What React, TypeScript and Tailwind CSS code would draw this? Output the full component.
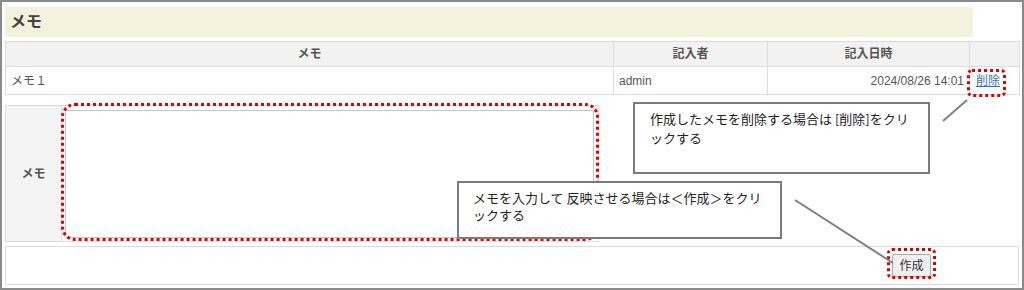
export default function App() {
  return (
    <div className="relative w-[1024px] h-[290px] border-2 border-[#8a8a8a] bg-white font-['Liberation_Sans','Noto_Sans_CJK_JP',sans-serif] text-[#555]">
      <div className="pl-[3px] pt-[5px]">
        <div className="w-[968px] h-[30px] bg-[#f4f2dc] px-[5px] text-[16px] font-bold leading-[30px] text-[#444]">
          メモ
        </div>

        <table className="mt-[4px] w-[1014px] table-fixed border-collapse text-[12px]">
          <colgroup>
            <col className="w-[608px]" />
            <col className="w-[154px]" />
            <col className="w-[202px]" />
            <col className="w-[50px]" />
          </colgroup>
          <thead>
            <tr className="h-[25px] bg-[#f2f2f2]">
              <th className="border border-[#dcdcdc] font-bold">メモ</th>
              <th className="border border-[#dcdcdc] font-bold">記入者</th>
              <th className="border border-[#dcdcdc] font-bold">記入日時</th>
              <th className="border border-[#dcdcdc]"></th>
            </tr>
          </thead>
          <tbody>
            <tr className="h-[28px]">
              <td className="border border-[#dcdcdc] px-[5px]">メモ１</td>
              <td className="border border-[#dcdcdc] px-[5px]">admin</td>
              <td className="border border-[#dcdcdc] pr-[5px] text-right">2024/08/26 14:01</td>
              <td className="border border-[#dcdcdc] pl-[6px]">
                <a href="#" className="text-[#2f74b8] underline">削除</a>
              </td>
            </tr>
          </tbody>
        </table>

        <div className="mt-[10px] flex w-[594px] h-[137px] border border-[#dcdcdc]">
          <div className="flex w-[56px] items-center justify-center border-r border-[#dcdcdc] bg-[#f4f4f4] text-[12px] font-bold">
            メモ
          </div>
          <div className="flex flex-1 pl-[3px] pt-[4px] pr-[4px] pb-[3px]">
            <textarea className="flex-1 resize-none rounded-[2px] border border-[#c6c6c6] bg-white" />
          </div>
        </div>

        <div className="mt-[4px] flex h-[39px] w-[1014px] items-center justify-end border border-[#dcdcdc] pr-[87px]">
          <button className="h-[23px] w-[39px] rounded-[2px] border border-[#a9a9a9] bg-[#efefef] text-[12px] text-[#333]">
            作成
          </button>
        </div>
      </div>

      {/* annotations */}
      <div className="absolute left-[965px] top-[67px] h-[28px] w-[39px] rounded-[5px] border-[3px] border-dotted border-[#e00000]" />
      <div className="absolute left-[59px] top-[101px] h-[138px] w-[538px] rounded-[14px] border-[3px] border-dotted border-[#e00000]" />
      <div className="absolute left-[885px] top-[246px] h-[31px] w-[49px] rounded-[5px] border-[3px] border-dotted border-[#e00000]" />

      <svg className="pointer-events-none absolute left-0 top-0" width="1020" height="286">
        <line x1="941" y1="119" x2="965" y2="98" stroke="#7f7f7f" strokeWidth="2" />
        <line x1="793" y1="198" x2="891" y2="261" stroke="#7f7f7f" strokeWidth="2" />
      </svg>

      <div className="absolute left-[631px] top-[100px] h-[72px] w-[297px] border-2 border-[#7a7a7a] bg-white pl-[15px] pt-[5px] font-['Noto_Sans_CJK_JP',sans-serif] text-[13px] leading-[19px] text-[#222]">
        作成したメモを削除する場合は [削除]をクリ
        <br />
        ックする
      </div>
      <div className="absolute left-[455px] top-[179px] h-[58px] w-[325px] border-2 border-[#7a7a7a] bg-white pl-[14px] pt-[6px] font-['Noto_Sans_CJK_JP',sans-serif] text-[13px] leading-[17px] text-[#222]">
        メモを入力して 反映させる場合は＜作成＞をクリ
        <br />
        ックする
      </div>
    </div>
  );
}
